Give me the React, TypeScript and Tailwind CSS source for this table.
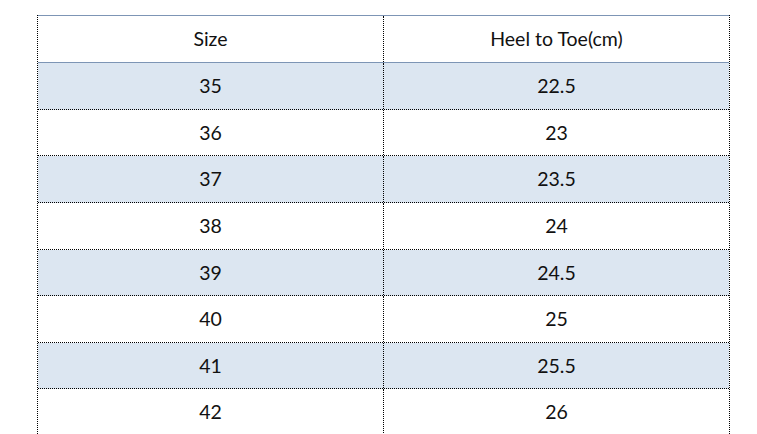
import React from "react";

const rows: [string, string, number][] = [
  ["35", "22.5", 46],
  ["36", "23", 45],
  ["37", "23.5", 46],
  ["38", "24", 46],
  ["39", "24.5", 45],
  ["40", "25", 46],
  ["41", "25.5", 45],
  ["42", "26", 46],
];

export default function App() {
  return (
    <div
      className="h-[434px] w-[757px] overflow-hidden bg-white pl-[37px] pt-[15px] text-[19.5px] text-[#111]"
      style={{ fontFamily: "Lato, 'Noto Sans', sans-serif" }}
    >
      <div className="w-[693px] border-x border-dotted border-black">
        {/* header */}
        <div className="flex h-[48px] border-y border-solid border-[#7d95b5]">
          <div className="flex w-[346px] items-center justify-center border-r border-dotted border-black">
            Size
          </div>
          <div className="flex flex-1 items-center justify-center">Heel to Toe(cm)</div>
        </div>
        {rows.map(([size, len, h], i) => (
          <div
            key={size}
            className={
              "flex border-b border-dotted border-black " +
              (i % 2 === 0 ? "bg-[#dce6f1]" : "bg-white")
            }
            style={{ height: h + 1 }}
          >
            <div className="flex w-[346px] items-center justify-center border-r border-dotted border-black">
              {size}
            </div>
            <div className="flex flex-1 items-center justify-center">{len}</div>
          </div>
        ))}
      </div>
    </div>
  );
}
